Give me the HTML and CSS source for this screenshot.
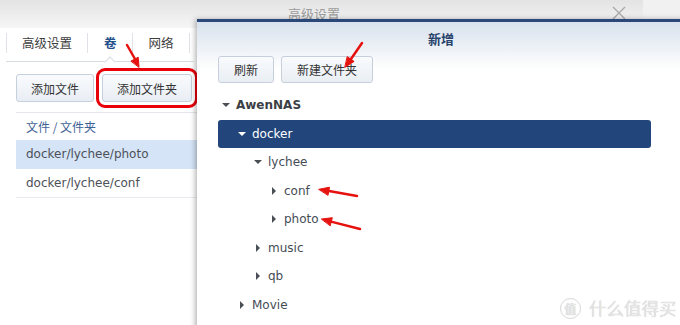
FILE: index.html
```html
<!DOCTYPE html>
<html lang="zh">
<head>
  <meta charset="UTF-8" />
  <title>新增</title>
  <link rel="stylesheet" href="styles.css">
</head>
<body>
  <div class="desk">
    <div class="bg-win">
      <div class="bg-title">
        <span class="bg-title-text">高级设置</span>
        <svg class="close" width="14" height="14" viewBox="0 0 14 14"><path d="M1 1L13 13M13 1L1 13" stroke="#a9a9a9" stroke-width="1.3" fill="none"/></svg>
      </div>
      <div class="tabs">
        <div class="tab">高级设置</div>
        <div class="tab active">卷</div>
        <div class="tab">网络</div>
      </div>
      <div class="toolbar">
        <button class="btn">添加文件</button>
        <button class="btn marked">添加文件夹</button>
      </div>
      <div class="grid">
        <div class="grid-head">文件 / 文件夹</div>
        <div class="grid-row selected">docker/lychee/photo</div>
        <div class="grid-row">docker/lychee/conf</div>
      </div>
    </div>
    <div class="side-win"></div>

    <div class="dialog">
      <div class="dialog-head">新增</div>
      <div class="dialog-toolbar">
        <button class="btn">刷新</button>
        <button class="btn">新建文件夹</button>
      </div>
      <div class="tree">
        <div class="node lvl0 bold"><span class="tog down"></span>AwenNAS</div>
        <div class="node lvl1 selected"><span class="tog down"></span>docker</div>
        <div class="node lvl2"><span class="tog down"></span>lychee</div>
        <div class="node lvl3"><span class="tog right"></span>conf</div>
        <div class="node lvl3"><span class="tog right"></span>photo</div>
        <div class="node lvl2"><span class="tog right"></span>music</div>
        <div class="node lvl2"><span class="tog right"></span>qb</div>
        <div class="node lvl1"><span class="tog right"></span>Movie</div>
      </div>
    </div>

    <svg class="marks" width="680" height="325" viewBox="0 0 680 325">
      <g fill="#e5120f" stroke="#e5120f" stroke-linecap="round">
        <line x1="127" y1="45" x2="135" y2="59" stroke-width="2.5"/>
        <polygon points="139,67 138.2,57.2 131.2,61" stroke-width="1"/>
        <line x1="362" y1="43" x2="351" y2="59" stroke-width="2.5"/>
        <polygon points="345,67.3 354.1,61.4 347.5,56.8" stroke-width="1"/>
        <line x1="357" y1="196" x2="329" y2="191" stroke-width="2.5"/>
        <polygon points="319,189.3 329.5,187.2 328.1,195" stroke-width="1"/>
        <line x1="360" y1="229" x2="331" y2="221.6" stroke-width="2.5"/>
        <polygon points="321.7,219 332.3,217.7 330.3,225.5" stroke-width="1"/>
      </g>
    </svg>

    <div class="watermark">
      <span class="wm-badge">值</span>
      <span class="wm-text">什么值得买</span>
    </div>
  </div>
</body>
</html>
```

FILE: styles.css
```css
body {
  margin: 0;
  padding: 0;
  font-family: "DejaVu Sans", "Noto Sans CJK SC", sans-serif;
  font-size: 12px;
  color: #444b55;
  background: #fff;
}

.desk {
  position: relative;
  width: 680px;
  height: 325px;
  overflow: hidden;
  display: flex;
}

.bg-win {
  width: 643px;
  height: 325px;
  background: #fff;
  box-shadow: 1px 0 3px rgba(0, 0, 0, 0.25);
  flex-shrink: 0;
}

.bg-title {
  height: 28px;
  background: linear-gradient(#e3e3e3, #f6f6f6);
  display: flex;
  align-items: center;
  position: relative;
}

.bg-title-text {
  margin-left: 288px;
  margin-top: -2px;
  font-size: 13px;
  color: #9b9b9b;
}

.close {
  margin-left: auto;
  margin-right: 17px;
  margin-top: -2px;
}

.side-win {
  flex: 1;
  background: linear-gradient(#f1f1f1, #f6f6f6);
}

.tabs {
  display: flex;
  margin-left: 6px;
  width: 188px;
  height: 33px;
  border-bottom: 1px solid #d9dee5;
  position: relative;
}

.tab {
  position: relative;
  padding: 0 16px;
  line-height: 31px;
  font-size: 12.5px;
  color: #3d3d3d;
}

.tab::after {
  content: "";
  position: absolute;
  right: 0;
  top: 5px;
  height: 20px;
  width: 1px;
  background: #dfe3e8;
}

.tab:first-child::before {
  content: "";
  position: absolute;
  left: 0;
  top: 5px;
  height: 20px;
  width: 1px;
  background: #dfe3e8;
}

.tab.active {
  color: #24508c;
  font-weight: bold;
}

.tab.active::before {
  content: "";
  position: absolute;
  left: 50%;
  bottom: -5px;
  width: 7px;
  height: 7px;
  margin-left: -4px;
  background: #fff;
  border-top: 1px solid #d9dee5;
  border-left: 1px solid #d9dee5;
  transform: rotate(45deg);
}

.toolbar {
  display: flex;
  gap: 8px;
  padding: 12px 0 0 16px;
}

.btn {
  height: 28px;
  padding: 0 14px;
  border: 1px solid #c6d0dc;
  border-radius: 3px;
  background: linear-gradient(#f9fbfd, #e9eef4);
  font-family: "Noto Sans CJK SC", sans-serif;
  font-size: 12px;
  color: #333;
}

.btn.marked {
  outline: 3.5px solid #e8000b;
  outline-offset: 3.5px;
  border-radius: 3px;
}

.grid {
  margin: 10px 0 0 16px;
  width: 190px;
}

.grid-head {
  height: 27px;
  line-height: 27px;
  padding-left: 10px;
  border-top: 1px solid #e3e7ec;
  color: #3f6296;
  font-family: "Noto Sans CJK SC", sans-serif;
}

.grid-row {
  height: 28px;
  line-height: 28px;
  padding-left: 10px;
  border-bottom: 1px solid #e8ebef;
  color: #4d5157;
}

.grid-row.selected {
  background: #d5e4f7;
  border-bottom-color: #d5e4f7;
}

.dialog {
  position: absolute;
  left: 197px;
  top: 19px;
  width: 488px;
  height: 310px;
  border-top: 3px solid #2a497a;
  background: linear-gradient(#d8e1ed 0, #fff 48px);
  box-shadow: -2px 0 5px rgba(0, 0, 0, 0.28);
}

.dialog-head {
  height: 34px;
  box-sizing: border-box;
  padding-top: 9px;
  text-align: center;
  font-family: "Noto Sans CJK SC", sans-serif;
  font-weight: bold;
  font-size: 13px;
  line-height: 16px;
  color: #27426b;
}

.dialog-toolbar {
  display: flex;
  gap: 7px;
  padding-left: 21px;
}

.dialog-toolbar .btn {
  height: 27px;
  padding: 0 15px;
}

.tree {
  margin: 8px 0 0 21px;
  width: 433px;
}

.node {
  height: 28.5px;
  display: flex;
  align-items: center;
  color: #454c55;
  border-radius: 3px;
}

.node.bold {
  font-weight: bold;
  color: #3b3f45;
}

.node.selected {
  background: #22467b;
  color: #fff;
}

.lvl0 { padding-left: 4px; }
.lvl1 { padding-left: 20px; }
.lvl2 { padding-left: 36px; }
.lvl3 { padding-left: 52px; }

.tog {
  width: 8px;
  height: 8px;
  margin-right: 6px;
  display: flex;
  align-items: center;
  justify-content: center;
}

.tog.down::before {
  content: "";
  border-left: 4px solid transparent;
  border-right: 4px solid transparent;
  border-top: 4px solid #4a4f56;
}

.tog.right::before {
  content: "";
  border-top: 4px solid transparent;
  border-bottom: 4px solid transparent;
  border-left: 4px solid #4a4f56;
}

.selected .tog.down::before {
  border-top-color: #fff;
}

.marks {
  position: absolute;
  left: 0;
  top: 0;
  pointer-events: none;
}

.watermark {
  position: absolute;
  left: 560px;
  top: 297px;
  height: 22px;
  display: flex;
  align-items: center;
  gap: 8px;
  white-space: nowrap;
  font-family: "Noto Sans CJK SC", sans-serif;
  line-height: 20px;
  color: #ececec;
  text-shadow: 0 0 1px #9a9a9a;
}

.wm-badge {
  width: 19px;
  height: 19px;
  border: 1px solid #d6d6d6;
  border-radius: 50%;
  font-size: 12px;
  line-height: 19px;
  text-align: center;
}

.wm-text {
  font-size: 17.5px;
  line-height: 20px;
  font-weight: 300;
}
```
